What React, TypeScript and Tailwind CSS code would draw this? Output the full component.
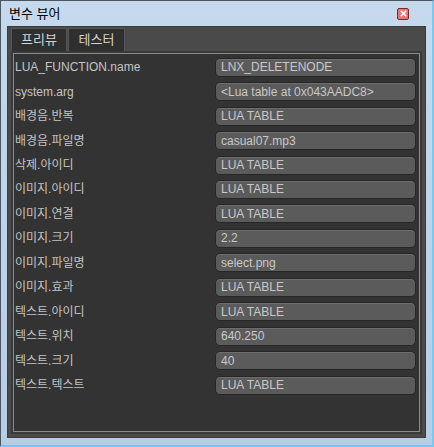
import { X } from 'lucide-react'

type Row = {
  label: string
  value: string
}

const rows: Row[] = [
  { label: 'LUA_FUNCTION.name', value: 'LNX_DELETENODE' },
  { label: 'system.arg', value: '<Lua table at 0x043AADC8>' },
  { label: '배경음.반복', value: 'LUA TABLE' },
  { label: '배경음.파일명', value: 'casual07.mp3' },
  { label: '삭제.아이디', value: 'LUA TABLE' },
  { label: '이미지.아이디', value: 'LUA TABLE' },
  { label: '이미지.연결', value: 'LUA TABLE' },
  { label: '이미지.크기', value: '2.2' },
  { label: '이미지.파일명', value: 'select.png' },
  { label: '이미지.효과', value: 'LUA TABLE' },
  { label: '텍스트.아이디', value: 'LUA TABLE' },
  { label: '텍스트.위치', value: '640.250' },
  { label: '텍스트.크기', value: '40' },
  { label: '텍스트.텍스트', value: 'LUA TABLE' }
]

const font = { fontFamily: '"Liberation Sans", "Noto Sans CJK KR", sans-serif' }

export default function App() {
  return (
    <div
      className="flex h-[447px] w-[434px] flex-col border-t border-l border-[#4a5663] border-b-2 border-b-[#5fd0f0] border-r-2 border-r-[#7cc9ea] bg-[linear-gradient(#c6d9ed,#b6cde6)] text-[12px]"
      style={font}
    >
      {/* title bar */}
      <div className="flex h-[25px] shrink-0 items-center justify-between pl-[8px] pr-[23px]">
        <span className="text-[13px] leading-none text-black">변수 뷰어</span>
        <button className="flex h-[12px] w-[12px] items-center justify-center rounded-[2px] border border-[#7a2a2a] bg-[#e07a7a]">
          <X className="h-[9px] w-[9px] text-white" strokeWidth={4} />
        </button>
      </div>

      {/* dark panel */}
      <div className="mx-[6px] mb-[7px] flex flex-1 flex-col border border-[#3c3c3c] bg-[#4a4a4a] px-[3px] pt-[1px] pb-[3px]">
        <div className="flex h-[23px] gap-[1px]">
          <div className="flex w-[56px] items-center justify-center border border-[#555] border-b-0 bg-[#2f2f2f] text-[13px] text-[#d4d4d4]">
            프리뷰
          </div>
          <div className="flex w-[57px] items-center justify-center border border-[#555] border-b-0 bg-[#2f2f2f] text-[13px] text-[#d4d4d4]">
            테스터
          </div>
        </div>

        <div className="flex flex-1 flex-col border-2 border-[#3a3a3a] bg-[#3a3a3a]">
          <div className="flex flex-1 flex-col border border-[#8a8a8a] bg-[#333333] pt-[1px]">
            {rows.map((r) => (
              <div key={r.label} className="flex h-[24.46px] items-center pl-[1px] pr-[3px]">
                <span className="w-[200px] shrink-0 text-[#c4c4c4]">{r.label}</span>
                <div className="flex h-[19px] flex-1 items-center rounded-[5px] border border-[#262626] bg-[#5b5b5b] px-[5px] text-[#c8c8c8] shadow-[inset_0_1px_0_#6e6e6e]">
                  {r.value}
                </div>
              </div>
            ))}
          </div>
        </div>
      </div>
    </div>
  )
}
